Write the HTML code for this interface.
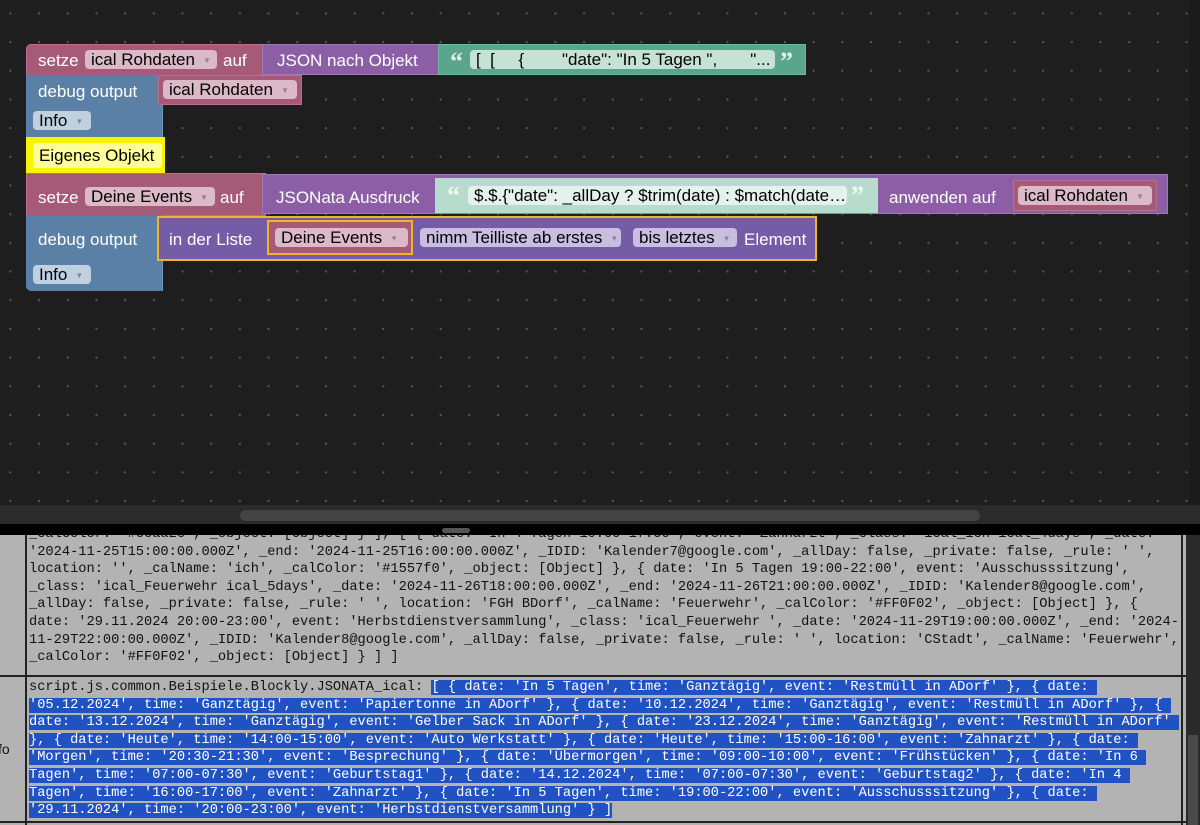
<!DOCTYPE html>
<html><head><meta charset="utf-8"><style>
*{margin:0;padding:0;box-sizing:border-box}
body{width:1200px;height:825px;overflow:hidden;background:#1e1e1e;font-family:"Liberation Sans",Arial,sans-serif;position:relative}
#ws{position:absolute;left:0;top:0;width:1200px;height:505px;background-color:#1e1e1e;background-image:radial-gradient(circle,#5a5a5a 0.9px,transparent 1.3px);background-size:28.7px 28.7px;background-position:-4px -1px}
.b{position:absolute;color:#fff;font-size:17px;line-height:1}
.t{position:absolute;color:#fff;font-size:17px;white-space:nowrap}
.dd{position:absolute;border-radius:4px;color:#000;font-size:17px;white-space:nowrap;padding-left:6px;line-height:19px;height:19px;overflow:hidden}
.dd i{font-style:normal;font-size:8px;color:#888;margin-left:8px;vertical-align:2px}
.q{position:absolute;font-family:"Liberation Serif",serif;font-weight:bold;font-size:26px;line-height:1}
.pink{background:#a55b78;border:1px solid #b86f8b}
.purp{background:#8c5ea5;border:1px solid #a079b8}
.blue{background:#5b80a5}
.green{background:#5ba58c;border:1px solid #71b79e}
#log{position:absolute;left:0;top:535px;width:1186px;height:290px;background:#b3b3b3;overflow:hidden}
.ln{position:absolute;left:29px;font-family:"Liberation Mono",monospace;font-size:13.7px;line-height:17.6px;white-space:pre;color:#111}
.sel{background:#2152c4;color:#fff}
</style></head><body>
<div id="ws"></div>

<!-- block 1 -->
<div class="b pink" style="left:26px;top:44px;width:237px;height:32px;border-radius:5px 0 0 0"></div>
<div class="t" style="left:38px;top:51px">setze</div>
<div class="dd" style="left:85px;top:50px;width:132px;background:#dbb9c7">ical Rohdaten<i>▼</i></div>
<div class="t" style="left:223px;top:51px">auf</div>
<div class="b purp" style="left:262px;top:44px;width:177px;height:31px"></div>
<div class="t" style="left:277px;top:51px">JSON nach Objekt</div>
<div class="b green" style="left:438px;top:44px;width:368px;height:31px"></div>
<div class="q" style="left:450px;top:49px;color:#e0f0ea">“</div>
<div class="dd" style="left:470px;top:50px;width:305px;background:#c6e2d6">[&nbsp; [&nbsp;&nbsp;&nbsp;&nbsp; {&nbsp;&nbsp;&nbsp;&nbsp;&nbsp;&nbsp;&nbsp; "date": "In 5 Tagen ",&nbsp;&nbsp;&nbsp;&nbsp;&nbsp;&nbsp; "...</div>
<div class="q" style="left:780px;top:49px;color:#e0f0ea">”</div>

<!-- debug 1 -->
<div class="b blue" style="left:26px;top:75px;width:137px;height:63px;border-right:1px solid #7097bb"></div>
<div class="t" style="left:38px;top:82px">debug output</div>
<div class="b pink" style="left:158px;top:75px;width:144px;height:30px"></div>
<div class="dd" style="left:163px;top:80px;width:134px;background:#dbb9c7">ical Rohdaten<i>▼</i></div>
<div class="dd" style="left:33px;top:111px;width:58px;background:#bfd0e0">Info<i>▼</i></div>

<!-- comment -->
<div class="b" style="left:26px;top:137px;width:139px;height:37px;background:#f5f500"></div>
<div class="dd" style="left:33px;top:143px;width:129px;height:25px;line-height:25px;background:#ffff99;border-radius:3px">Eigenes Objekt</div>

<!-- block 2 -->
<div class="b pink" style="left:26px;top:173px;width:240px;height:43px"></div>
<div class="t" style="left:38px;top:188px">setze</div>
<div class="dd" style="left:85px;top:187px;width:130px;background:#dbb9c7">Deine Events<i>▼</i></div>
<div class="t" style="left:220px;top:188px">auf</div>
<div class="b purp" style="left:262px;top:174px;width:906px;height:40px"></div>
<div class="t" style="left:276px;top:188px">JSONata Ausdruck</div>
<div class="b" style="left:435px;top:178px;width:443px;height:35px;background:#b7dccd"></div>
<div class="q" style="left:447px;top:183px;color:#f0f8f4">“</div>
<div class="dd" style="left:468px;top:186px;width:379px;background:#e4f1ec">$.$.{"date": _allDay ? $trim(date) : $match(date…</div>
<div class="q" style="left:851px;top:183px;color:#f0f8f4">”</div>
<div class="t" style="left:889px;top:188px">anwenden auf</div>
<div class="b pink" style="left:1013px;top:180px;width:144px;height:31px"></div>
<div class="dd" style="left:1018px;top:186px;width:134px;background:#dbb9c7">ical Rohdaten<i>▼</i></div>

<!-- debug 2 -->
<div class="b blue" style="left:26px;top:215px;width:137px;height:76px;border-right:1px solid #7097bb;border-radius:0 0 0 5px"></div>
<div class="t" style="left:38px;top:230px">debug output</div>
<div class="b" style="left:157px;top:216px;width:660px;height:45px;background:#745ca6;border:2px solid #f0b429"></div>
<div class="t" style="left:169px;top:230px">in der Liste</div>
<div class="b" style="left:267px;top:220px;width:146px;height:35px;background:#a55b78;border:2px solid #f0b429"></div>
<div class="dd" style="left:275px;top:228px;width:133px;background:#dbb9c7">Deine Events<i>▼</i></div>
<div class="dd" style="left:420px;top:228px;width:201px;background:#c9bde0">nimm Teilliste ab erstes<i>▼</i></div>
<div class="dd" style="left:633px;top:228px;width:104px;background:#c9bde0">bis letztes<i>▼</i></div>
<div class="t" style="left:744px;top:230px">Element</div>
<div class="dd" style="left:33px;top:265px;width:58px;background:#bfd0e0">Info<i>▼</i></div>

<!-- scrollbars -->
<div style="position:absolute;left:1190px;top:0;width:10px;height:505px;background:#1a1a1a"></div>
<div style="position:absolute;left:0;top:505px;width:1200px;height:19px;background:#2b2b2b"></div>
<div style="position:absolute;left:240px;top:510px;width:740px;height:11px;border-radius:6px;background:#444"></div>
<div style="position:absolute;left:0;top:524px;width:1200px;height:11px;background:#000"></div>
<div style="position:absolute;left:442px;top:528px;width:28px;height:5px;border-radius:3px;background:#555"></div>

<div id="log">
<div style="position:absolute;left:25px;top:0;width:2px;height:290px;background:#222"></div>
<div style="position:absolute;left:0;top:140px;width:1186px;height:2px;background:#222"></div>
<div style="position:absolute;left:0;top:286px;width:1186px;height:2px;background:#222"></div>
<div style="position:absolute;left:1181px;top:0;width:2px;height:290px;background:#222"></div>
<div style="position:absolute;left:-2px;top:206px;font-family:'Liberation Sans',sans-serif;font-size:14px;color:#111">fo</div>
<div class="ln" style="top:-9px">_calColor: '#06aa2c', _object: [Object] } ], [ { date: 'In 4 Tagen 16:00-17:00', event: 'Zahnarzt', _class: 'ical_ich ical_4days', _date:</div>
<div class="ln" style="top:8.6px">'2024-11-25T15:00:00.000Z', _end: '2024-11-25T16:00:00.000Z', _IDID: 'Kalender7@google.com', _allDay: false, _private: false, _rule: ' ',</div>
<div class="ln" style="top:26.2px">location: '', _calName: 'ich', _calColor: '#1557f0', _object: [Object] }, { date: 'In 5 Tagen 19:00-22:00', event: 'Ausschusssitzung',</div>
<div class="ln" style="top:43.8px">_class: 'ical_Feuerwehr ical_5days', _date: '2024-11-26T18:00:00.000Z', _end: '2024-11-26T21:00:00.000Z', _IDID: 'Kalender8@google.com',</div>
<div class="ln" style="top:61.4px">_allDay: false, _private: false, _rule: ' ', location: 'FGH BDorf', _calName: 'Feuerwehr', _calColor: '#FF0F02', _object: [Object] }, {</div>
<div class="ln" style="top:79px">date: '29.11.2024 20:00-23:00', event: 'Herbstdienstversammlung', _class: 'ical_Feuerwehr ', _date: '2024-11-29T19:00:00.000Z', _end: '2024-</div>
<div class="ln" style="top:96.6px">11-29T22:00:00.000Z', _IDID: 'Kalender8@google.com', _allDay: false, _private: false, _rule: ' ', location: 'CStadt', _calName: 'Feuerwehr',</div>
<div class="ln" style="top:114.2px">_calColor: '#FF0F02', _object: [Object] } ] ]</div>

<div class="ln" style="top:144px">script.js.common.Beispiele.Blockly.JSONATA_ical: <span class="sel">[ { date: 'In 5 Tagen', time: 'Ganztägig', event: 'Restmüll in ADorf' }, { date: </span></div>
<div class="ln" style="top:161.6px"><span class="sel">'05.12.2024', time: 'Ganztägig', event: 'Papiertonne in ADorf' }, { date: '10.12.2024', time: 'Ganztägig', event: 'Restmüll in ADorf' }, { </span></div>
<div class="ln" style="top:179.2px"><span class="sel">date: '13.12.2024', time: 'Ganztägig', event: 'Gelber Sack in ADorf' }, { date: '23.12.2024', time: 'Ganztägig', event: 'Restmüll in ADorf' </span></div>
<div class="ln" style="top:196.8px"><span class="sel">}, { date: 'Heute', time: '14:00-15:00', event: 'Auto Werkstatt' }, { date: 'Heute', time: '15:00-16:00', event: 'Zahnarzt' }, { date: </span></div>
<div class="ln" style="top:214.4px"><span class="sel">'Morgen', time: '20:30-21:30', event: 'Besprechung' }, { date: 'Übermorgen', time: '09:00-10:00', event: 'Frühstücken' }, { date: 'In 6 </span></div>
<div class="ln" style="top:232px"><span class="sel">Tagen', time: '07:00-07:30', event: 'Geburtstag1' }, { date: '14.12.2024', time: '07:00-07:30', event: 'Geburtstag2' }, { date: 'In 4 </span></div>
<div class="ln" style="top:249.6px"><span class="sel">Tagen', time: '16:00-17:00', event: 'Zahnarzt' }, { date: 'In 5 Tagen', time: '19:00-22:00', event: 'Ausschusssitzung' }, { date: </span></div>
<div class="ln" style="top:267.2px"><span class="sel">'29.11.2024', time: '20:00-23:00', event: 'Herbstdienstversammlung' } ]</span></div>
</div>
<div style="position:absolute;left:1186px;top:535px;width:14px;height:290px;background:#2a2a2a"></div>
<div style="position:absolute;left:1188px;top:735px;width:10px;height:90px;background:#4a4a4a"></div>
</body></html>
